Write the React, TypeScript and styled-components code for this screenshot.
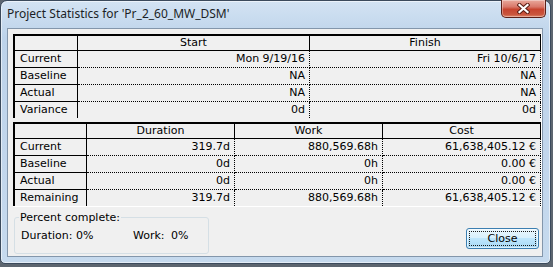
import React from 'react'
import styled, { createGlobalStyle } from 'styled-components'

const GlobalStyle = createGlobalStyle`
  html, body {
    margin: 0;
    padding: 0;
    background: #5d6670;
  }
  body {
    font-family: "DejaVu Sans", Verdana, sans-serif;
    font-size: 11px;
    color: #000;
  }
`

const Window = styled.div`
  box-sizing: border-box;
  width: 551px;
  height: 264px;
  display: flex;
  flex-direction: column;
  padding: 0 7px 6px 6px;
  border: 1px solid #3b4a5c;
  border-radius: 7px 7px 5px 5px;
  background: linear-gradient(180deg, #d3e3f3 0%, #bdd3ea 14%, #c2d6ec 60%, #c6daee 100%);
  box-shadow: inset 0 0 0 1px rgba(255, 255, 255, 0.55);
`

const TitleBar = styled.div`
  height: 27px;
  display: flex;
  justify-content: space-between;
  align-items: flex-start;
`

const Title = styled.span`
  font-family: "Noto Sans", "Open Sans", sans-serif;
  font-size: 12px;
  color: #1b1f26;
  line-height: 16px;
  margin-top: 5px;
  margin-left: 0;
`

const CaptionClose = styled.div`
  box-sizing: border-box;
  width: 45px;
  height: 18px;
  margin-top: -1px;
  margin-right: -3px;
  border: 1px solid #5b2018;
  border-top: none;
  border-radius: 0 0 5px 5px;
  background: linear-gradient(180deg, #e9a99c 0%, #d9786a 40%, #c7442f 55%, #c9553d 85%, #e0876a 100%);
  box-shadow: inset 0 0 0 1px rgba(255, 255, 255, 0.35);
  display: flex;
  align-items: center;
  justify-content: center;
`

const Client = styled.div`
  flex: 1;
  box-sizing: border-box;
  border: 1px solid #8396ab;
  background: #f0f0f0;
  padding: 5px 0 0 5px;
  display: flex;
  flex-direction: column;
`

const Panel = styled.div`
  display: flex;
  flex-direction: column;
  gap: 4px;
  border-right: 1px solid #ffffff;
  border-bottom: 1px solid #ffffff;
`

const Grid = styled.div<{ $cols: string }>`
  display: grid;
  grid-template-columns: ${(p) => p.$cols};
  border-top: 2px solid #000;
  border-left: 2px solid #000;
`

const HeadCell = styled.div`
  box-sizing: border-box;
  height: 15px;
  line-height: 14px;
  text-align: center;
  border-bottom: 1px solid #000;
  border-right: 1px solid #000;
  white-space: nowrap;
`

const LabelCell = styled.div<{ $last?: boolean }>`
  box-sizing: border-box;
  height: ${(p) => (p.$last ? 16 : 17)}px;
  line-height: 16px;
  padding-left: 5px;
  border-right: 1px solid #000;
  border-bottom: ${(p) => (p.$last ? 'none' : '1px solid #000')};
  white-space: nowrap;
`

const ValueCell = styled.div<{ $last?: boolean }>`
  box-sizing: border-box;
  height: ${(p) => (p.$last ? 16 : 17)}px;
  line-height: 16px;
  padding-right: 4px;
  text-align: right;
  border-right: 1px dotted #000;
  border-bottom: ${(p) => (p.$last ? 'none' : '1px dotted #000')};
  white-space: nowrap;
`

const BottomRow = styled.div`
  display: flex;
  justify-content: space-between;
  align-items: flex-start;
  margin-top: 4px;
`

const Group = styled.fieldset`
  box-sizing: border-box;
  width: 195px;
  height: 43px;
  margin: 0 0 0 1px;
  padding: 0 0 0 6px;
  border: 1px solid #d5dfe5;
  border-radius: 3px;
`

const Legend = styled.legend`
  padding: 0 1px;
  margin-left: -2px;
  line-height: 13px;
`

const StatLine = styled.div`
  display: flex;
  margin-top: 5px;
  line-height: 14px;
`

const Stat = styled.span<{ $w: number }>`
  width: ${(p) => p.$w}px;
  white-space: nowrap;
`

const CloseButton = styled.button`
  box-sizing: border-box;
  width: 73px;
  height: 21px;
  margin: 17px 3px 0 0;
  padding: 0;
  font-family: "DejaVu Sans", Verdana, sans-serif;
  font-size: 11px;
  color: #000;
  border: 1px solid #3c7fb1;
  border-radius: 3px;
  background: linear-gradient(180deg, #eaf6fd 0%, #d9f0fc 45%, #bee6fd 50%, #a7d9f5 100%);
  box-shadow: inset 0 0 0 1px rgba(255, 255, 255, 0.6);
  outline: 1px dotted #1a1a1a;
  outline-offset: -4px;
`

const dates = [
  ['Current', 'Mon 9/19/16', 'Fri 10/6/17'],
  ['Baseline', 'NA', 'NA'],
  ['Actual', 'NA', 'NA'],
  ['Variance', '0d', '0d'],
]

const totals = [
  ['Current', '319.7d', '880,569.68h', '61,638,405.12 €'],
  ['Baseline', '0d', '0h', '0.00 €'],
  ['Actual', '0d', '0h', '0.00 €'],
  ['Remaining', '319.7d', '880,569.68h', '61,638,405.12 €'],
]

const CloseGlyph = () => (
  <svg width="13" height="11" viewBox="0 0 13 11">
    <path d="M2.5 2 L10.5 9 M10.5 2 L2.5 9" stroke="#5a1d14" strokeWidth="4.2" strokeLinecap="square" />
    <path d="M2.5 2 L10.5 9 M10.5 2 L2.5 9" stroke="#ffffff" strokeWidth="2.2" strokeLinecap="square" />
  </svg>
)

const Table = ({ cols, heads, rows }: { cols: string; heads: string[]; rows: string[][] }) => (
  <Grid $cols={cols}>
    <HeadCell />
    {heads.map((h) => (
      <HeadCell key={h}>{h}</HeadCell>
    ))}
    {rows.map((r, i) => {
      const last = i === rows.length - 1
      return (
        <React.Fragment key={r[0]}>
          <LabelCell $last={last}>{r[0]}</LabelCell>
          {r.slice(1).map((v, j) => (
            <ValueCell key={j} $last={last}>
              {v}
            </ValueCell>
          ))}
        </React.Fragment>
      )
    })}
  </Grid>
)

const App: React.FC = () => (
  <>
    <GlobalStyle />
    <Window>
      <TitleBar>
        <Title>Project Statistics for 'Pr_2_60_MW_DSM'</Title>
        <CaptionClose>
          <CloseGlyph />
        </CaptionClose>
      </TitleBar>
      <Client>
        <Panel>
          <Table cols="63px 232px 231px" heads={['Start', 'Finish']} rows={dates} />
          <Table cols="72px 148px 148px 158px" heads={['Duration', 'Work', 'Cost']} rows={totals} />
        </Panel>
        <BottomRow>
          <Group>
            <Legend>Percent complete:</Legend>
            <StatLine>
              <Stat $w={55}>Duration:</Stat>
              <Stat $w={57}>0%</Stat>
              <Stat $w={38}>Work:</Stat>
              <Stat $w={30}>0%</Stat>
            </StatLine>
          </Group>
          <CloseButton>Close</CloseButton>
        </BottomRow>
      </Client>
    </Window>
  </>
)

export default App
